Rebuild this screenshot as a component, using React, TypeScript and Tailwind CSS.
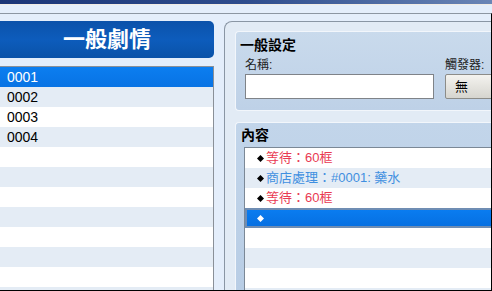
import type { ReactNode } from 'react';

const font = "font-['Liberation_Sans','Noto_Sans_CJK_TC',sans-serif]";

const scenes = ['0001', '0002', '0003', '0004', '', '', '', '', '', '', '', ''];

function Diamond({ white }: { white?: boolean }) {
  return (
    <svg width="7" height="7" viewBox="0 0 7 7" className="mr-[2px] shrink-0">
      <polygon points="3.5,0 7,3.5 3.5,7 0,3.5" fill={white ? '#ffffff' : '#000000'} />
    </svg>
  );
}

type Cmd = { text: string; color: string } | null;

const commands: Cmd[] = [
  { text: '等待：60框', color: 'text-[#e93a52]' },
  { text: '商店處理：#0001: 藥水', color: 'text-[#3f8fe0]' },
  { text: '等待：60框', color: 'text-[#e93a52]' },
  null,
];

function Row({ i, children }: { i: number; children?: ReactNode }) {
  return (
    <div className={`flex h-[20px] shrink-0 items-center ${i % 2 ? 'bg-[#e4ecf5]' : 'bg-white'}`}>{children}</div>
  );
}

export default function App() {
  return (
    <div className={`flex h-[291px] w-[492px] flex-col overflow-hidden border-b border-black bg-[#e4eefb] ${font}`}>
      <div className="h-[4px] shrink-0 bg-gradient-to-r from-[#1b3577] via-[#2e4c8d] to-[#6a85b6]" />
      <div className="h-px shrink-0 bg-[#f1ebe3]" />
      <div className="h-[8px] shrink-0" />
      <div className="flex min-h-0 flex-1 flex-col border-r border-t border-r-black border-t-[#8c96a2]">
        <div className="flex min-h-0 flex-1 pt-[7px]">
          {/* left: scene list */}
          <div className="flex min-h-0 w-[214px] shrink-0 flex-col">
            <div className="flex h-[37px] shrink-0 items-center justify-center rounded-r-[5px] bg-gradient-to-b from-[#0b52aa] via-[#0d5cbc] to-[#0a52a8]">
              <span className="text-[22px] font-bold leading-none text-white">一般劇情</span>
            </div>
            <div className="mt-[8px] min-h-0 flex-1 overflow-hidden border-r border-t border-[#8a9098]">
              {scenes.map((s, i) =>
                i === 0 ? (
                  <div
                    key={i}
                    className="flex h-[20px] items-center bg-gradient-to-b from-[#0c7ef0] to-[#0873e4] pl-[7px] text-[14px] text-white"
                  >
                    {s}
                  </div>
                ) : (
                  <Row key={i} i={i}>
                    <span className="pl-[7px] text-[14px] text-black">{s}</span>
                  </Row>
                ),
              )}
            </div>
          </div>

          {/* right: editor panel */}
          <div className="ml-[10px] flex min-h-0 min-w-0 flex-1 flex-col overflow-hidden rounded-tl-[8px] border-l border-t border-[#8a96a4] bg-[#e2ebf5] pl-[10px] pt-[9px]">
            <div className="h-[80px] shrink-0 rounded-l-[4px] border-b border-l border-t border-[#f2f6fb] bg-gradient-to-b from-[#c9daec] to-[#bed1e7] pt-[5px]">
              <div className="pl-[4px] text-[14px] font-bold leading-[16px] text-black">一般設定</div>
              <div className="mt-[5px] flex gap-[11px] pl-[9px]">
                <div className="flex w-[189px] shrink-0 flex-col">
                  <span className="text-[12px] leading-[14px] text-[#222]">名稱:</span>
                  <div className="mt-[2px] h-[25px] border border-[#7f8388] bg-white" />
                </div>
                <div className="flex w-[70px] shrink-0 flex-col">
                  <span className="text-[12px] leading-[14px] text-[#222]">觸發器:</span>
                  <div className="mt-[2px] flex h-[25px] items-center rounded-[2px] border border-[#8c8c88] bg-gradient-to-b from-[#f4f3ef] to-[#d6d5cf] pl-[9px] text-[13px] text-black">
                    無
                  </div>
                </div>
              </div>
            </div>

            <div className="mt-[11px] flex min-h-0 flex-1 flex-col rounded-tl-[4px] border-l border-t border-[#f2f6fb] bg-gradient-to-b from-[#c2d5ea] to-[#b8cde5] pt-[4px]">
              <div className="shrink-0 pl-[5px] text-[14px] font-bold leading-[16px] text-black">內容</div>
              <div className="ml-[8px] mt-[4px] min-h-0 flex-1 overflow-hidden border-l border-t border-[#7b8896] bg-white">
                {commands.map((c, i) =>
                  c ? (
                    <Row key={i} i={i}>
                      <span className="flex items-center pl-[12px] text-[13px]">
                        <Diamond />
                        <span className={c.color}>{c.text}</span>
                      </span>
                    </Row>
                  ) : (
                    <div
                      key={i}
                      className="flex h-[20px] items-center border-2 border-r-0 border-[#6f8db3] bg-gradient-to-b from-[#0a7cf0] to-[#0670e2] pl-[10px]"
                    >
                      <Diamond white />
                    </div>
                  ),
                )}
                {[4, 5, 6, 7].map((i) => (
                  <Row key={i} i={i} />
                ))}
              </div>
            </div>
          </div>
        </div>
      </div>
    </div>
  );
}
